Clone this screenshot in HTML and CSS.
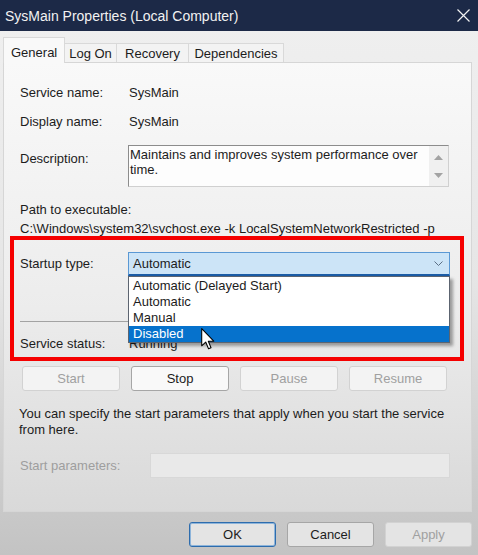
FILE: index.html
```html
<!DOCTYPE html>
<html>
<head>
<meta charset="utf-8">
<link rel="stylesheet" href="styles.css">
</head>
<body>
<div class="window">
  <div class="titlebar">
    <span class="title">SysMain Properties (Local Computer)</span>
    <svg class="close" viewBox="0 0 13 13"><path d="M0.5 0.5 L12.5 12.5 M12.5 0.5 L0.5 12.5" stroke="#f2f2f2" stroke-width="1.2" fill="none"/></svg>
  </div>
  <div class="main">
    <div class="tabs">
      <div class="tab active tab-general">General</div>
      <div class="tab tab-logon">Log On</div>
      <div class="tab tab-recovery">Recovery</div>
      <div class="tab tab-deps">Dependencies</div>
    </div>
    <div class="panel">
      <div class="field row-first"><span class="label">Service name:</span><span class="value">SysMain</span></div>
      <div class="field row-next"><span class="label">Display name:</span><span class="value">SysMain</span></div>
      <div class="field row-desc">
        <span class="label desc-label">Description:</span>
        <div class="descbox">
          <div class="desctext">Maintains and improves system performance over time.</div>
          <div class="scroll">
            <svg class="arrow" viewBox="0 0 9 5"><path d="M0 5 L4.5 0 L9 5 Z" fill="#a3a3a3"/></svg>
            <svg class="arrow" viewBox="0 0 9 5"><path d="M0 0 L4.5 5 L9 0 Z" fill="#a3a3a3"/></svg>
          </div>
        </div>
      </div>
      <div class="pathlabel">Path to executable:</div>
      <div class="pathvalue">C:\Windows\system32\svchost.exe -k LocalSystemNetworkRestricted -p</div>

      <div class="highlight">
        <div class="field startup">
          <span class="label">Startup type:</span>
          <div class="combo">
            <span class="combo-text">Automatic</span>
            <svg class="chevron" viewBox="0 0 9 5"><path d="M0.5 0.5 L4.5 4.5 L8.5 0.5" stroke="#5b6f85" stroke-width="1" fill="none"/></svg>
            <ul class="droplist">
              <li>Automatic (Delayed Start)</li>
              <li>Automatic</li>
              <li>Manual</li>
              <li class="selected">Disabled</li>
            </ul>
            <svg class="cursor" viewBox="0 0 13 21"><path d="M0.5 0.5 L0.5 17 L4.3 13.4 L7 19.8 L9.4 18.8 L6.8 12.6 L12 12.6 Z" fill="#ffffff" stroke="#000000" stroke-width="1" stroke-linejoin="round"/></svg>
          </div>
        </div>
        <div class="separator"></div>
        <div class="field status"><span class="label">Service status:</span><span class="value">Running</span></div>
      </div>

      <div class="svc-buttons">
        <div class="btn">Start</div>
        <div class="btn enabled">Stop</div>
        <div class="btn">Pause</div>
        <div class="btn">Resume</div>
      </div>

      <p class="note">You can specify the start parameters that apply when you start the service<br>from here.</p>

      <div class="field params">
        <span class="label params-label">Start parameters:</span>
        <div class="params-input"></div>
      </div>
    </div>
    <div class="footer">
      <div class="btn enabled ok">OK</div>
      <div class="btn enabled">Cancel</div>
      <div class="btn">Apply</div>
    </div>
  </div>
</div>
</body>
</html>
```
FILE: styles.css
```css
* { box-sizing: border-box; }

body {
  margin: 0;
  width: 478px;
  height: 555px;
  overflow: hidden;
  font-family: "Liberation Sans", Arial, sans-serif;
  font-size: 13px;
  color: #1c1c1c;
}

.window {
  height: 555px;
  display: flex;
  flex-direction: column;
  background: linear-gradient(#f0f0f0, #e6e6e6 50%, #c3c3c3);
}

.titlebar {
  height: 31px;
  flex: none;
  background: #1c2947;
  color: #f2f2f2;
  display: flex;
  align-items: center;
  justify-content: space-between;
  padding: 0 8px 0 5px;
  font-size: 14px;
}

.close {
  width: 13px;
  height: 13px;
}

.main {
  padding: 6px 6px 0 3px;
}

.tabs {
  display: flex;
  align-items: flex-end;
  height: 26px;
  margin-bottom: -1px;
  position: relative;
  z-index: 1;
}

.tab {
  height: 19px;
  margin-bottom: 1px;
  margin-left: -1px;
  border: 1px solid #d9d9d9;
  border-bottom: none;
  background: #f3f3f3;
  display: flex;
  align-items: center;
  justify-content: center;
  padding-top: 1px;
}

.tab.active {
  height: 26px;
  margin-left: 0;
  margin-bottom: 0;
  background: #f9f9f9;
  padding-top: 3px;
  justify-content: flex-start;
  padding-left: 7px;
  position: relative;
  z-index: 2;
}

.tab-general { width: 62px; }
.tab-logon { width: 53px; }
.tab-recovery { width: 73px; }
.tab-deps { width: 96px; }

.panel {
  border: 1px solid #d6d6d6;
  background: linear-gradient(#f9f9f9, #ececec 55%, #d9d9d9);
  padding: 0 0 33px 0;
}

.field {
  display: flex;
  margin-left: 16px;
  line-height: 16px;
}

.label {
  width: 108px;
  flex: none;
}

.value {
  padding-left: 1px;
}

.row-first { margin-top: 22px; }
.row-next { margin-top: 13px; }
.row-desc { margin-top: 15px; }

.desc-label {
  margin-top: 6px;
}

.descbox {
  width: 321px;
  height: 42px;
  display: flex;
  border: 1px solid #d0d0d0;
  border-top-color: #8c8c8c;
  border-left-color: #8c8c8c;
  background: #fdfdfd;
}

.desctext {
  flex: 1;
  padding: 1px 2px 0 1px;
  line-height: 15px;
}

.scroll {
  width: 19px;
  background: #f0f0f0;
  display: flex;
  flex-direction: column;
  align-items: center;
  justify-content: space-between;
  padding: 9px 0 8px;
}

.arrow {
  width: 9px;
  height: 5px;
}

.pathlabel {
  margin: 15px 0 0 16px;
  line-height: 16px;
}

.pathvalue {
  margin: 3px 0 0 16px;
  line-height: 16px;
}

.highlight {
  margin: -1px 7px 0 6px;
  border: 4px solid #f50000;
  padding: 12px 0 5px 0;
}

.highlight .field {
  margin-left: 6px;
}

.startup {
  align-items: center;
}

.combo {
  position: relative;
  width: 322px;
  height: 24px;
  background: #cce4f7;
  border: 1px solid #5a98d4;
  border-bottom: 2px solid #1b5ca6;
  display: flex;
  align-items: center;
  justify-content: space-between;
  padding: 0 6px 0 4px;
}

.chevron {
  width: 9px;
  height: 5px;
}

.droplist {
  position: absolute;
  left: -1px;
  top: 23px;
  width: 322px;
  margin: 0;
  padding: 1px 0 0;
  list-style: none;
  background: #ffffff;
  border: 1px solid #5c6470;
  box-shadow: 3px 3px 3px rgba(0, 0, 0, 0.35);
  z-index: 5;
}

.droplist li {
  height: 16px;
  line-height: 16px;
  padding-left: 4px;
  font-size: 13px;
}

.droplist li.selected {
  background: #0672cc;
  color: #ffffff;
}

.cursor {
  position: absolute;
  left: 72px;
  top: 75px;
  width: 14px;
  height: 22px;
  z-index: 6;
}

.separator {
  margin: 45px 10px 0 6px;
  height: 1px;
  background: #a3a3a3;
}

.status {
  margin-top: 14px;
}

.svc-buttons {
  display: grid;
  grid-template-columns: repeat(4, 98px);
  column-gap: 11px;
  margin: 5px 0 0 18px;
}

.btn {
  height: 25px;
  border: 1px solid #d2d2d2;
  border-radius: 3px;
  background: #f3f3f3;
  color: #a0a0a0;
  display: flex;
  align-items: center;
  justify-content: center;
}

.btn.enabled {
  color: #1c1c1c;
  border-color: #a6a6a6;
  background: #f9f9f9;
}

.note {
  margin: 15px 0 0 15px;
  line-height: 16px;
}

.params {
  margin-top: 15px;
  align-items: center;
}

.params-label {
  width: 130px;
  color: #9e9e9e;
}

.params-input {
  width: 300px;
  height: 25px;
  border: 1px solid #d8d8d8;
  background: #e9e9e9;
}

.footer {
  display: flex;
  justify-content: flex-end;
  gap: 11px;
  margin-top: 10px;
}

.footer .btn {
  width: 87px;
  background: #e4e4e4;
}

.footer .btn.ok {
  border-color: #2d6cad;
  box-shadow: inset 0 0 0 1px #8db4da;
}
```
